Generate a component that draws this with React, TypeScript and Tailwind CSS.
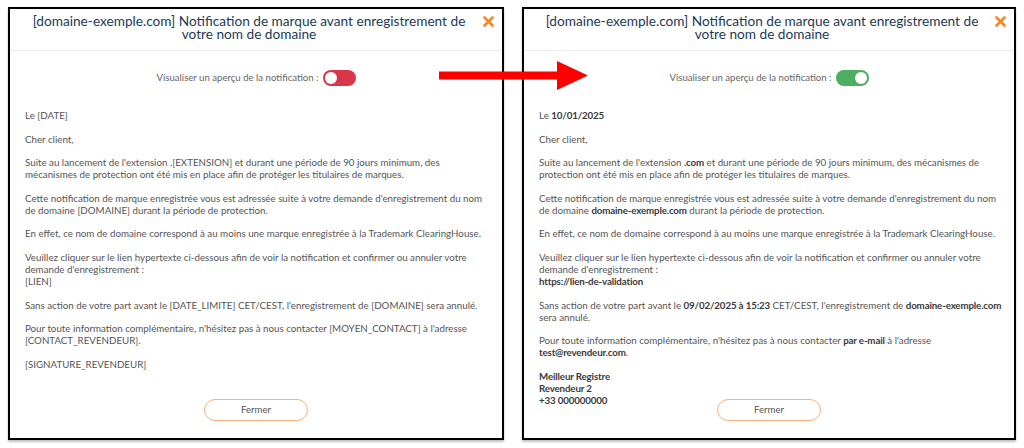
import React from "react";

const FONT = { fontFamily: "Lato, 'Open Sans', Arial, sans-serif" };

export default function App() {
  return (
    <div className="relative h-[448px] w-[1024px] overflow-hidden bg-white" style={FONT}>
      <div className="flex gap-[18px] pl-[8px] pt-[7px]">
        <NoticeModal preview={false} width="w-[496px]" />
        <NoticeModal preview width="w-[494px]" />
      </div>

      {/* red arrow drawn over both panels */}
      <svg className="absolute left-[439px] top-[61px]" width="149" height="29" viewBox="0 0 149 29">
        <rect x="0" y="10.5" width="120" height="8" fill="#ff0000" />
        <polygon points="118,0 149,14.5 118,29" fill="#ff0000" />
      </svg>
    </div>
  );
}

function NoticeModal({ preview, width }: { preview: boolean; width: string }) {
  return (
    <div className={`relative flex h-[433px] ${width} flex-col border-2 border-black bg-white shadow-[0_2px_2px_rgba(0,0,0,0.25)]`}>
      <div className="h-[42px] shrink-0 border-b border-[#ececec] pl-[16px] pr-[30px] pt-[6px] text-center text-[13.65px] leading-[13px] text-[#1b3a57]">
        [domaine-exemple.com] Notification de marque avant enregistrement de votre nom de domaine
      </div>
      <button className="absolute right-[8px] top-[7px]">
        <svg width="11" height="11" viewBox="0 0 11 11">
          <path d="M1.5 1.5 L9.5 9.5 M9.5 1.5 L1.5 9.5" stroke="#f7862a" strokeWidth="2.6" strokeLinecap="round" />
        </svg>
      </button>

      <div className={`min-h-0 flex-1 pl-[15px] ${preview ? "pr-[5px]" : "pr-[15px]"}`}>
        <div className={`mt-[19px] flex items-center justify-center gap-[4px] ${preview ? "pr-[10px]" : ""}`}>
          <span className="text-[9.6px] text-[#666]">Visualiser un aperçu de la notification :</span>
          <Toggle on={preview} />
        </div>

        <div className="mt-[23px] flex flex-col gap-[11.6px] text-[9.75px] leading-[12px] text-[#555]">
          {preview ? <FilledBody /> : <TemplateBody />}
        </div>
      </div>

      <div className="flex shrink-0 justify-center pb-[17px]">
        <button className="h-[22px] w-[104px] rounded-full border border-[#f9b27a] bg-white text-[9.6px] text-[#555]">
          Fermer
        </button>
      </div>
    </div>
  );
}

function Toggle({ on }: { on: boolean }) {
  return (
    <span
      className={`flex h-[16px] w-[33px] items-center rounded-full px-[2px] ${
        on ? "justify-end bg-[#4cae60]" : "justify-start bg-[#d9364a]"
      }`}
    >
      <span className="h-[12px] w-[12px] rounded-full bg-white" />
    </span>
  );
}

function TemplateBody() {
  return (
    <>
      <p>Le [DATE]</p>
      <p>Cher client,</p>
      <p>
        Suite au lancement de l'extension .[EXTENSION] et durant une période de 90 jours minimum, des mécanismes de
        protection ont été mis en place afin de protéger les titulaires de marques.
      </p>
      <p>
        Cette notification de marque enregistrée vous est adressée suite à votre demande d'enregistrement du nom
        <br />
        de domaine [DOMAINE] durant la période de protection.
      </p>
      <p>En effet, ce nom de domaine correspond à au moins une marque enregistrée à la Trademark ClearingHouse.</p>
      <p>
        Veuillez cliquer sur le lien hypertexte ci-dessous afin de voir la notification et confirmer ou annuler votre
        demande d'enregistrement :
        <br />
        [LIEN]
      </p>
      <p>Sans action de votre part avant le [DATE_LIMITE] CET/CEST, l'enregistrement de [DOMAINE] sera annulé.</p>
      <p>
        Pour toute information complémentaire, n'hésitez pas à nous contacter [MOYEN_CONTACT] à l'adresse
        [CONTACT_REVENDEUR].
      </p>
      <p>[SIGNATURE_REVENDEUR]</p>
    </>
  );
}

function B({ children }: { children: React.ReactNode }) {
  return <strong className="whitespace-nowrap font-bold tracking-[-0.15px] text-[#3a3a3a]">{children}</strong>;
}

function FilledBody() {
  return (
    <>
      <p>
        Le <B>10/01/2025</B>
      </p>
      <p>Cher client,</p>
      <p>
        Suite au lancement de l'extension <B>.com</B> et durant une période de 90 jours minimum, des mécanismes de
        protection ont été mis en place afin de protéger les titulaires de marques.
      </p>
      <p>
        Cette notification de marque enregistrée vous est adressée suite à votre demande d'enregistrement du nom
        <br />
        de domaine <B>domaine-exemple.com</B> durant la période de protection.
      </p>
      <p>En effet, ce nom de domaine correspond à au moins une marque enregistrée à la Trademark ClearingHouse.</p>
      <p>
        Veuillez cliquer sur le lien hypertexte ci-dessous afin de voir la notification et confirmer ou annuler votre
        demande d'enregistrement :
        <br />
        <B>https://lien-de-validation</B>
      </p>
      <p>
        Sans action de votre part avant le <B>09/02/2025 à 15:23</B> CET/CEST, l'enregistrement de{" "}
        <B>domaine-exemple.com</B> sera annulé.
      </p>
      <p>
        Pour toute information complémentaire, n'hésitez pas à nous contacter <B>par e-mail</B> à l'adresse{" "}
        <B>test@revendeur.com</B>.
      </p>
      <p>
        <B>Meilleur Registre</B>
        <br />
        <B>Revendeur 2</B>
        <br />
        <B>+33 000000000</B>
      </p>
    </>
  );
}
